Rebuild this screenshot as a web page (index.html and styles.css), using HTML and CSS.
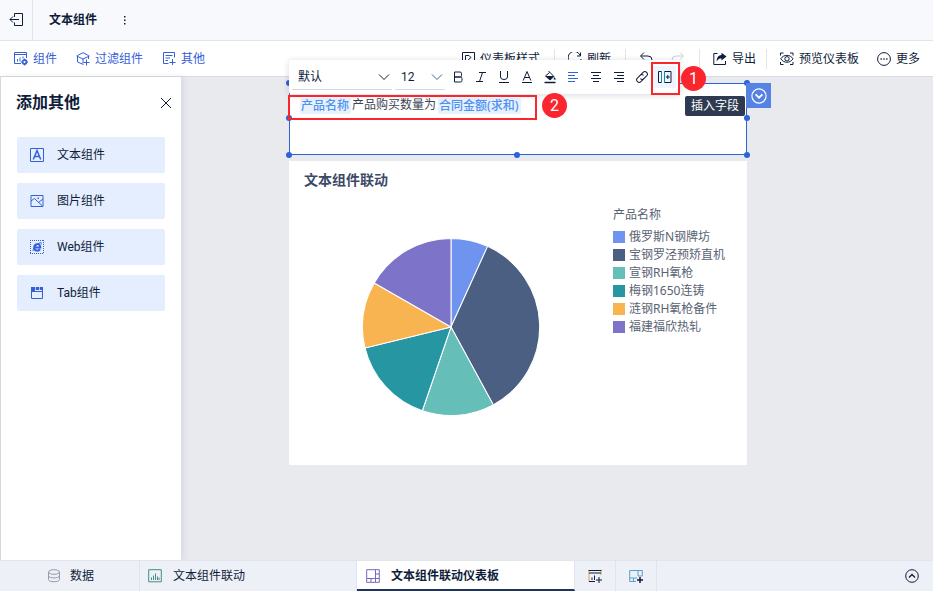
FILE: index.html
```html
<!DOCTYPE html>
<html lang="zh-CN">
<head>
  <meta charset="UTF-8" />
  <meta name="viewport" content="width=device-width, initial-scale=1.0" />
  <title>文本组件</title>
  <link rel="stylesheet" href="styles.css">
</head>
<body>
  <header class="header">
    <button type="button" class="back" aria-label="返回">
      <svg class="icon" viewBox="0 0 14 14"><path d="M5.500 4V.5H13.500V12.500H5.500V9.500M10 6.500H1M4 3.500L1 6.500L4 9.500"/></svg>
    </button>
    <h1>文本组件</h1>
    <button type="button" class="dots" aria-label="菜单">
      <svg class="icon solid" viewBox="0 0 14 14"><path d="M6 3H7.500V4.500H6ZM6 6.500H7.500V8H6ZM6 10H7.500V11.500H6Z"/></svg>
    </button>
  </header>

  <nav class="toolbar">
    <div class="tools-left">
      <button type="button" class="tool">
        <svg class="icon" viewBox="0 0 14 14"><path d="M7 11.500H.5V.5H12.500V6M.5 2.500H12.500M3.500 9.500V7M6 9.500V5.500M9 6.500V4.500"/><circle cx="10.500" cy="10" r="2" stroke-width="1.800"/><path d="M10.500 6.500V8M10.500 12V13.500M7 10H8M13 10H14"/></svg>
        组件
      </button>
      <button type="button" class="tool">
        <svg class="icon" viewBox="0 0 14 14"><path d="M7.500 12.500L1.500 10V3.500L7 .7L12.500 3.500V7M.5 4L7 7L13.500 4M7 7V11.500M10.500 7.500V13.500M7.500 10.500H13.500"/></svg>
        过滤组件
      </button>
      <button type="button" class="tool">
        <svg class="icon" viewBox="0 0 14 14"><path d="M6.500 11.500H1.500V.5H12.500V5.500M3.500 3.500H10.500M3.500 6H8M3.500 8.500H6M10.500 7V13M7.500 10.500H13.500"/></svg>
        其他
      </button>
    </div>
    <div class="tools-right">
      <button type="button" class="tool">
        <svg class="icon" viewBox="0 0 14 14"><path d="M1.500 .5H13.500V12.500H1.500ZM4.500 9V3.500H8L10 5.500L7.500 7.500L11 11"/></svg>
        仪表板样式
      </button>
      <span class="sep"></span>
      <button type="button" class="tool">
        <svg class="icon" viewBox="0 0 14 14"><path d="M.5 7.500A6 6 0 0 1 12 3.500M12.500 .5V4H9M13 7A6 6 0 0 1 2 10.500"/></svg>
        刷新
      </button>
      <span class="sep"></span>
      <button type="button" class="tool" aria-label="撤销">
        <svg class="icon" viewBox="0 0 14 14"><path d="M5 .5L1.500 4L5 7.500M2 4H9A4 4 0 0 1 13 8V10"/></svg>
      </button>
      <button type="button" class="tool next" aria-label="重做" disabled>
        <svg class="icon" viewBox="0 0 14 14"><path d="M9 .5L12.500 4L9 7.500M12 4H5A4 4 0 0 0 1 8V10"/></svg>
      </button>
      <span class="sep"></span>
      <button type="button" class="tool">
        <svg class="icon" viewBox="0 0 14 14"><path d="M4.500 1.500H.8V12.500H12.500V9"/><path class="solid" d="M8.500 .7L13.500 4.500L8.500 8.500V6.500C6.500 6.500 5 7 3.700 9.500C3.700 5.500 5.500 3.200 8.500 3Z"/></svg>
        导出
      </button>
      <span class="sep tight"></span>
      <button type="button" class="tool">
        <svg class="icon" viewBox="0 0 14 14"><path d="M.5 3.500V1H3.500M10 1H13V3.500M13 10V12.500H10M3.500 12.500H.5V10M.8 6.800C3.500 2.200 10.300 2.200 13 6.800C10.300 11.400 3.500 11.400 .8 6.800Z"/><circle cx="7" cy="6.800" r="2.200"/></svg>
        预览仪表板
      </button>
      <button type="button" class="tool next">
        <svg class="icon" viewBox="0 0 14 14"><circle cx="7" cy="7" r="6.400"/><path stroke-width="1.300" d="M3.500 7H4.800M6.400 7H7.700M9.200 7H10.500"/></svg>
        更多
      </button>
    </div>
  </nav>

  <div class="workspace">
    <aside class="sidebar">
      <div class="sidebar-head">
        <h2>添加其他</h2>
        <button type="button" aria-label="关闭">
          <svg class="icon" viewBox="0 0 14 14"><path d="M2 2L12 12M12 2L2 12"/></svg>
        </button>
      </div>
      <button type="button" class="component">
        <svg class="icon" viewBox="0 0 14 14"><path d="M.5 .5H13.500V13.500H.5Z"/><path stroke-width="1.500" d="M3.300 11.500L7 2.500L10.700 11.500M4.600 8.500H9.400"/></svg>
        文本组件
      </button>
      <button type="button" class="component">
        <svg class="icon" viewBox="0 0 14 14"><path d="M1 1.500H13V12.500H1ZM1 7L4.500 4.500L12.500 12M8.500 8.500L13 5"/><path class="solid" d="M7.500 3.500H9V5H7.500Z"/></svg>
        图片组件
      </button>
      <button type="button" class="component">
        <svg class="icon" viewBox="0 0 14 14"><path stroke-dasharray="1 1" d="M0 .5H14M0 13.500H14M.5 0V14M13.500 0V14"/><path stroke-width="2" d="M4 7.500H10.300C10.300 2.800 4.300 3.200 4.200 7.500C4.200 11 8.300 11.600 10 9.200"/><path d="M3.500 11C2 10.500 5 5 10.500 2.500C11.500 2.200 11.500 3.500 11 4.500"/></svg>
        Web组件
      </button>
      <button type="button" class="component">
        <svg class="icon" viewBox="0 0 14 14"><path d="M1.500 4V12.500H12.500V4M1 5.500H13"/><path class="solid" d="M1 1H5V5H1ZM5.700 1H9.300V4H5.700ZM10 1H13V4H10Z"/></svg>
        Tab组件
      </button>
    </aside>

    <main class="canvas">
      <section class="text-widget">
        <p class="content"><span class="field">产品名称</span><span class="words">产品购买数量为</span><span class="field">合同金额(求和)</span></p>
        <i class="handle top left"></i>
        <i class="handle top right"></i>
        <i class="handle middle left"></i>
        <i class="handle middle right"></i>
        <i class="handle bottom left"></i>
        <i class="handle bottom center"></i>
        <i class="handle bottom right"></i>

        <div class="editor-bar">
          <div class="dropdown font">
            <select aria-label="字体"><option>默认</option></select>
            <svg class="icon" viewBox="0 0 14 14"><path d="M2 4.500L7 9.500L12 4.500"/></svg>
          </div>
          <div class="dropdown size">
            <select aria-label="字号"><option>12</option></select>
            <svg class="icon" viewBox="0 0 14 14"><path d="M2 4.500L7 9.500L12 4.500"/></svg>
          </div>
          <div class="formats">
            <button type="button" aria-label="加粗"><svg class="icon" viewBox="0 0 14 14"><path d="M3.500 2H9Q10.500 2 10.500 3.500V5.500Q10.500 7 9 7H3.500ZM3.500 7H9.500Q11 7 11 8.500V10.500Q11 12 9.500 12H3.500Z"/></svg></button>
            <button type="button" aria-label="斜体"><svg class="icon" viewBox="0 0 14 14"><path d="M5 2.500H12M2 11.500H9M8.500 2.500L5.500 11.500"/></svg></button>
            <button type="button" aria-label="下划线"><svg class="icon" viewBox="0 0 14 14"><path d="M3.500 1V7Q3.500 9.500 7 9.500T10.500 7V1M2 12.500H12"/></svg></button>
            <button type="button" aria-label="文字颜色"><svg class="icon" viewBox="0 0 14 14"><path d="M3.200 10.500L7 1.500L10.800 10.500M4.600 7.500H9.400M2 12.500H12"/></svg></button>
            <button type="button" aria-label="背景颜色"><svg class="icon" viewBox="0 0 14 14"><path d="M5.500 1L11 6.500L7 10L2.500 6L6.500 2.500"/><path class="solid" d="M2.500 6H11L7 10ZM11.500 7L13 9.500H10.500Z"/><path stroke-width="1.500" d="M1.500 12.500H12.500"/></svg></button>
            <button type="button" class="on" aria-label="左对齐"><svg class="icon" viewBox="0 0 14 14"><path d="M2 2.500H12M2 5.500H9M2 8.500H12M2 11.500H9"/></svg></button>
            <button type="button" aria-label="居中"><svg class="icon" viewBox="0 0 14 14"><path d="M2 2.500H12M4 5.500H10M2 8.500H12M4 11.500H10"/></svg></button>
            <button type="button" aria-label="右对齐"><svg class="icon" viewBox="0 0 14 14"><path d="M2 2.500H12M5 5.500H12M2 8.500H12M5 11.500H12"/></svg></button>
            <button type="button" aria-label="链接"><svg class="icon" viewBox="0 0 14 14"><g transform="rotate(-45 7 7)"><path d="M8.500 9.500H3A2.500 2.500 0 0 1 3 4.500H7A2.500 2.500 0 0 1 9.200 7M5.500 4.500H11A2.500 2.500 0 0 1 11 9.500H7A2.500 2.500 0 0 1 4.800 7"/></g></svg></button>
            <button type="button" class="insert" aria-label="插入字段"><svg class="icon" viewBox="0 0 14 14"><path d="M.5 1.500H3.500V12.500H.5ZM6.500 1.500H13V12.500H6.500ZM9.800 5V9M7.800 7H11.800"/><path class="teal" d="M3.500 1V13M6.500 1V13"/></svg><span class="mark"></span></button>
          </div>
        </div>

        <span class="tooltip">插入字段</span>
        <button type="button" class="widget-menu" aria-label="组件菜单">
          <svg class="icon" viewBox="0 0 14 14"><circle cx="7" cy="7" r="6.200"/><path stroke-width="1.500" d="M4 5.500L7 8.500L10 5.500"/></svg>
        </button>
        <span class="mark text-mark"></span>
        <span class="step one">1</span>
        <span class="step two">2</span>
      </section>

      <section class="chart-widget">
        <h3>文本组件联动</h3>
        <div class="chart">
          <svg class="pie" viewBox="-88.500 -88.500 177 177" role="img" aria-label="合同金额">
            <path fill="#6f94ef" d="M0 0V-88A88 88 0 0 1 36.400 -80.200Z"/>
            <path fill="#4b5f82" d="M0 0L36.400 -80.200A88 88 0 0 1 42 77.400Z"/>
            <path fill="#65beb8" d="M0 0L42 77.400A88 88 0 0 1 -28.500 83.300Z"/>
            <path fill="#2596a2" d="M0 0L-28.500 83.300A88 88 0 0 1 -85.500 20.800Z"/>
            <path fill="#f9b452" d="M0 0L-85.500 20.800A88 88 0 0 1 -76.300 -43.800Z"/>
            <path fill="#7d73c8" d="M0 0L-76.300 -43.800A88 88 0 0 1 0 -88Z"/>
          </svg>
          <div class="legend">
            <h4>产品名称</h4>
            <ul>
              <li class="blue">俄罗斯N钢牌坊</li>
              <li class="navy">宝钢罗泾预矫直机</li>
              <li class="mint">宣钢RH氧枪</li>
              <li class="cyan">梅钢1650连铸</li>
              <li class="orange">涟钢RH氧枪备件</li>
              <li class="purple">福建福欣热轧</li>
            </ul>
          </div>
        </div>
      </section>
    </main>
  </div>

  <footer class="tabs">
    <button type="button" class="data">
      <svg class="icon" viewBox="0 0 14 14"><ellipse cx="7" cy="3" rx="5.500" ry="2.300"/><path d="M1.500 3V10.500C1.500 13.500 12.500 13.500 12.500 10.500V3M1.500 6.700C1.500 9.700 12.500 9.700 12.500 6.700"/></svg>
      数据
    </button>
    <button type="button" class="tab chart-tab">
      <svg class="icon" viewBox="0 0 14 14"><path d="M.7 .7H13.300V12.800H.7Z"/><path d="M3.500 11V8.500M5.500 11V6.500M7.500 11V4.500M9.500 11V7.500M11 11V8.500"/></svg>
      文本组件联动
    </button>
    <button type="button" class="tab board-tab active">
      <svg class="icon" viewBox="0 0 14 14"><path d="M.7 .7H13.300V13.300H.7ZM9.500 .7V13.300M.7 9.500H13.300M9.500 5H13.300M5 9.500V13.300"/></svg>
      文本组件联动仪表板
    </button>
    <button type="button" class="add" aria-label="添加组件">
      <svg class="icon" viewBox="0 0 14 14"><path class="amber" d="M1 12.500V1.500M13 1.500V6"/><path d="M.5 1.500H13.500M1 4H13M1 12.500H7M4 11V8.500M6.500 11V6.500M11 8V14M8 11H14"/></svg>
    </button>
    <button type="button" class="add" aria-label="添加仪表板">
      <svg class="icon" viewBox="0 0 14 14"><path class="sky" d="M7 12.500H.7V1.500H13.300V7M9 1.500V7H13M.7 9H8M4.500 9V12.500"/><path stroke-width="1.500" d="M11 8V14M8 11H14"/></svg>
    </button>
    <button type="button" class="collapse" aria-label="收起">
      <svg class="icon" viewBox="0 0 14 14"><circle cx="7" cy="7" r="6.300"/><path stroke-width="1.300" d="M4 8.500L7 5.500L10 8.500"/></svg>
    </button>
  </footer>
</body>
</html>
```
FILE: styles.css
```css
* {
  box-sizing: border-box;
}
body, html {
  height: 100%;
  margin: 0;
}
body {
  display: flex;
  flex-direction: column;
  overflow: hidden;
  font-family: Roboto, "Noto Sans CJK SC", sans-serif;
  font-size: 12px;
  line-height: 18px;
  color: #0f1d3a;
  background: #e8eaee;
}
h1, h2, h3, h4, p, ul {
  margin: 0;
  padding: 0;
}
button {
  display: flex;
  align-items: center;
  margin: 0;
  padding: 0;
  border: none;
  background: none;
  color: inherit;
  font: inherit;
  white-space: nowrap;
  cursor: pointer;
}
.icon {
  flex: none;
  width: 14px;
  height: 14px;
  fill: none;
  stroke: currentColor;
  stroke-width: 1;
}
.solid {
  fill: currentColor;
  stroke: none;
}

/* top bars */
.header {
  display: flex;
  flex: none;
  align-items: center;
  height: 41px;
  background: #f8f9fd;
  border-bottom: 1px solid #e1e4ee;
}
.header .back {
  justify-content: center;
  width: 33px;
  height: 40px;
  border-right: 1px solid #e1e4ee;
}
.header h1 {
  margin: 0 21px 0 16px;
  font-size: 12px;
  font-weight: bold;
}
.toolbar {
  display: flex;
  flex: none;
  justify-content: space-between;
  height: 36px;
  padding: 0 13px 0 14px;
  background: #fff;
  border-bottom: 1px solid #d9dce5;
}
.tools-left, .tools-right {
  display: flex;
  align-items: center;
}
.tools-left {
  gap: 19px;
  color: #3560d8;
}
.tool {
  gap: 5px;
}
.tool:disabled {
  color: #c9cdd6;
}
.tool.next {
  margin-left: 18px;
}
.sep {
  width: 1px;
  height: 20px;
  margin: 0 13px 0 14px;
  background: #e1e4ea;
}
.sep.tight {
  margin-left: 10px;
}

/* side panel */
.workspace {
  display: flex;
  flex: 1;
  min-height: 0;
}
.sidebar {
  flex: none;
  width: 182px;
  padding: 2px 16px 0;
  background: #fff;
  border-left: 1px solid #d5d9e4;
  border-right: 1px solid #dcdfe6;
  box-shadow: 1px 0 6px rgba(40, 50, 80, 0.1);
}
.sidebar-head {
  display: flex;
  align-items: center;
  justify-content: space-between;
  height: 48px;
  margin: 0 -8px 10px -1px;
}
.sidebar-head h2 {
  font-size: 16px;
  line-height: 24px;
}
.component {
  gap: 13px;
  width: 148px;
  height: 36px;
  margin-bottom: 10px;
  padding-left: 13px;
  background: #e5eeff;
  border-radius: 2px;
}
.component .icon {
  color: #3560d8;
}

/* canvas */
.canvas {
  flex: 1;
  padding: 6px 186px 0 107px;
}
.text-widget {
  position: relative;
  min-height: 72px;
  margin-bottom: 6px;
  background: #fff;
  border: 1px solid #2e62d9;
}
.content {
  display: flex;
  padding: 13px 0 0 10px;
  font-family: "Noto Sans", "Noto Sans CJK SC", sans-serif;
  line-height: 16px;
}
.field {
  margin-top: 1px;
  padding: 0 2px 0 1px;
  background: #e8f1fe;
  border-radius: 2px;
  color: #4d92f0;
  font-weight: 500;
}
.words {
  margin: 0 2px 0 1px;
  color: #3d4657;
}
.handle {
  position: absolute;
  width: 6px;
  height: 6px;
  background: #2e62d9;
  border-radius: 50%;
}
.top { top: -4px; }
.middle { top: 31px; }
.bottom { bottom: -4px; }
.left { left: -4px; }
.center { left: calc(50% - 4px); }
.right { right: -4px; }

.editor-bar {
  position: absolute;
  top: -24px;
  left: -1px;
  display: flex;
  align-items: center;
  gap: 3px;
  height: 34px;
  padding: 0 4px 0 3px;
  background: #fff;
  border-radius: 2px;
  box-shadow: 0 1px 6px rgba(30, 40, 70, 0.18);
}
.dropdown {
  position: relative;
  height: 26px;
  border-bottom: 1px solid #d4d7dd;
}
.dropdown.font {
  width: 100px;
}
.dropdown.size {
  width: 50px;
}
.dropdown select {
  width: 100%;
  height: 25px;
  padding: 0 16px 0 6px;
  border: none;
  background: none;
  appearance: none;
  color: inherit;
  font: inherit;
}
.dropdown .icon {
  position: absolute;
  top: 6px;
  right: 1px;
  pointer-events: none;
}
.dropdown.size .icon {
  color: #3f5f9e;
}
.formats {
  display: flex;
  margin-left: -2px;
}
.formats button {
  position: relative;
  justify-content: center;
  width: 23px;
  height: 22px;
}
.formats .on {
  color: #2e62d9;
}
.formats .insert {
  background: #eff5fd;
}
.teal {
  stroke: #188aa0;
}
.mark {
  position: absolute;
  top: -4px;
  left: -2px;
  width: 29px;
  height: 33px;
  border: 2px solid #fb252d;
}
.text-mark {
  top: 11px;
  width: 249px;
  height: 25px;
}
.step {
  position: absolute;
  width: 25px;
  height: 25px;
  border-radius: 50%;
  background: #fb252d;
  color: #fff;
  font-size: 16px;
  line-height: 25px;
  text-align: center;
}
.step.one {
  top: -18px;
  left: 391px;
}
.step.two {
  top: 9px;
  left: 252px;
}
.tooltip {
  position: absolute;
  top: 12px;
  right: 1px;
  padding: 1px 6px;
  background: #2d3a50;
  border-radius: 2px;
  color: #fff;
}
.widget-menu {
  position: absolute;
  top: -1px;
  left: 100%;
  justify-content: center;
  width: 25px;
  height: 25px;
  background: #5682e4;
  color: #fff;
}
.widget-menu .icon {
  width: 16px;
  height: 16px;
}

/* pie chart */
.chart-widget {
  min-height: 304px;
  padding-top: 9px;
  background: #fff;
}
.chart-widget h3 {
  padding-left: 15px;
  color: #3d4a66;
  font-size: 14px;
  font-weight: bold;
  line-height: 20px;
}
.chart {
  display: flex;
  align-items: flex-start;
  padding-top: 16px;
}
.pie {
  width: 178px;
  height: 178px;
  margin: 32px auto 0;
  stroke: #fff;
  stroke-width: 1;
}
.legend {
  flex: none;
  width: 134px;
  color: #596273;
  font-family: "Noto Sans", "Noto Sans CJK SC", sans-serif;
}
.legend h4 {
  margin-bottom: 4px;
  font-size: 12px;
  font-weight: normal;
}
.legend ul {
  list-style: none;
}
.legend li {
  display: flex;
  align-items: center;
  gap: 4px;
  height: 18px;
}
.legend li::before {
  content: "";
  width: 12px;
  height: 12px;
}
.blue::before { background: #6f94ef; }
.navy::before { background: #4b5f82; }
.mint::before { background: #65beb8; }
.cyan::before { background: #2596a2; }
.orange::before { background: #f9b452; }
.purple::before { background: #7d73c8; }

/* bottom tabs */
.tabs {
  display: flex;
  flex: none;
  height: 31px;
  background: #edf0f6;
  border-top: 1px solid #e1e5ed;
}
.tabs button {
  border-right: 1px solid #e0e4ee;
}
.tabs .data {
  gap: 9px;
  width: 140px;
  padding-left: 47px;
}
.data .icon {
  color: #969dab;
}
.tabs .tab {
  gap: 11px;
  width: 217px;
  padding-left: 8px;
}
.chart-tab .icon {
  color: #438c82;
}
.board-tab .icon {
  color: #7767bd;
}
.tabs .active {
  width: 218px;
  padding-top: 2px;
  padding-left: 9px;
  background: #fff;
  border-bottom: 2px solid #1d345c;
  font-weight: bold;
}
.tabs .add {
  justify-content: center;
  width: 41px;
}
.amber {
  stroke: #dda45b;
}
.sky {
  stroke: #5aa0c8;
}
.tabs .collapse {
  margin-left: auto;
  padding-right: 14px;
  border-right: none;
}
```
